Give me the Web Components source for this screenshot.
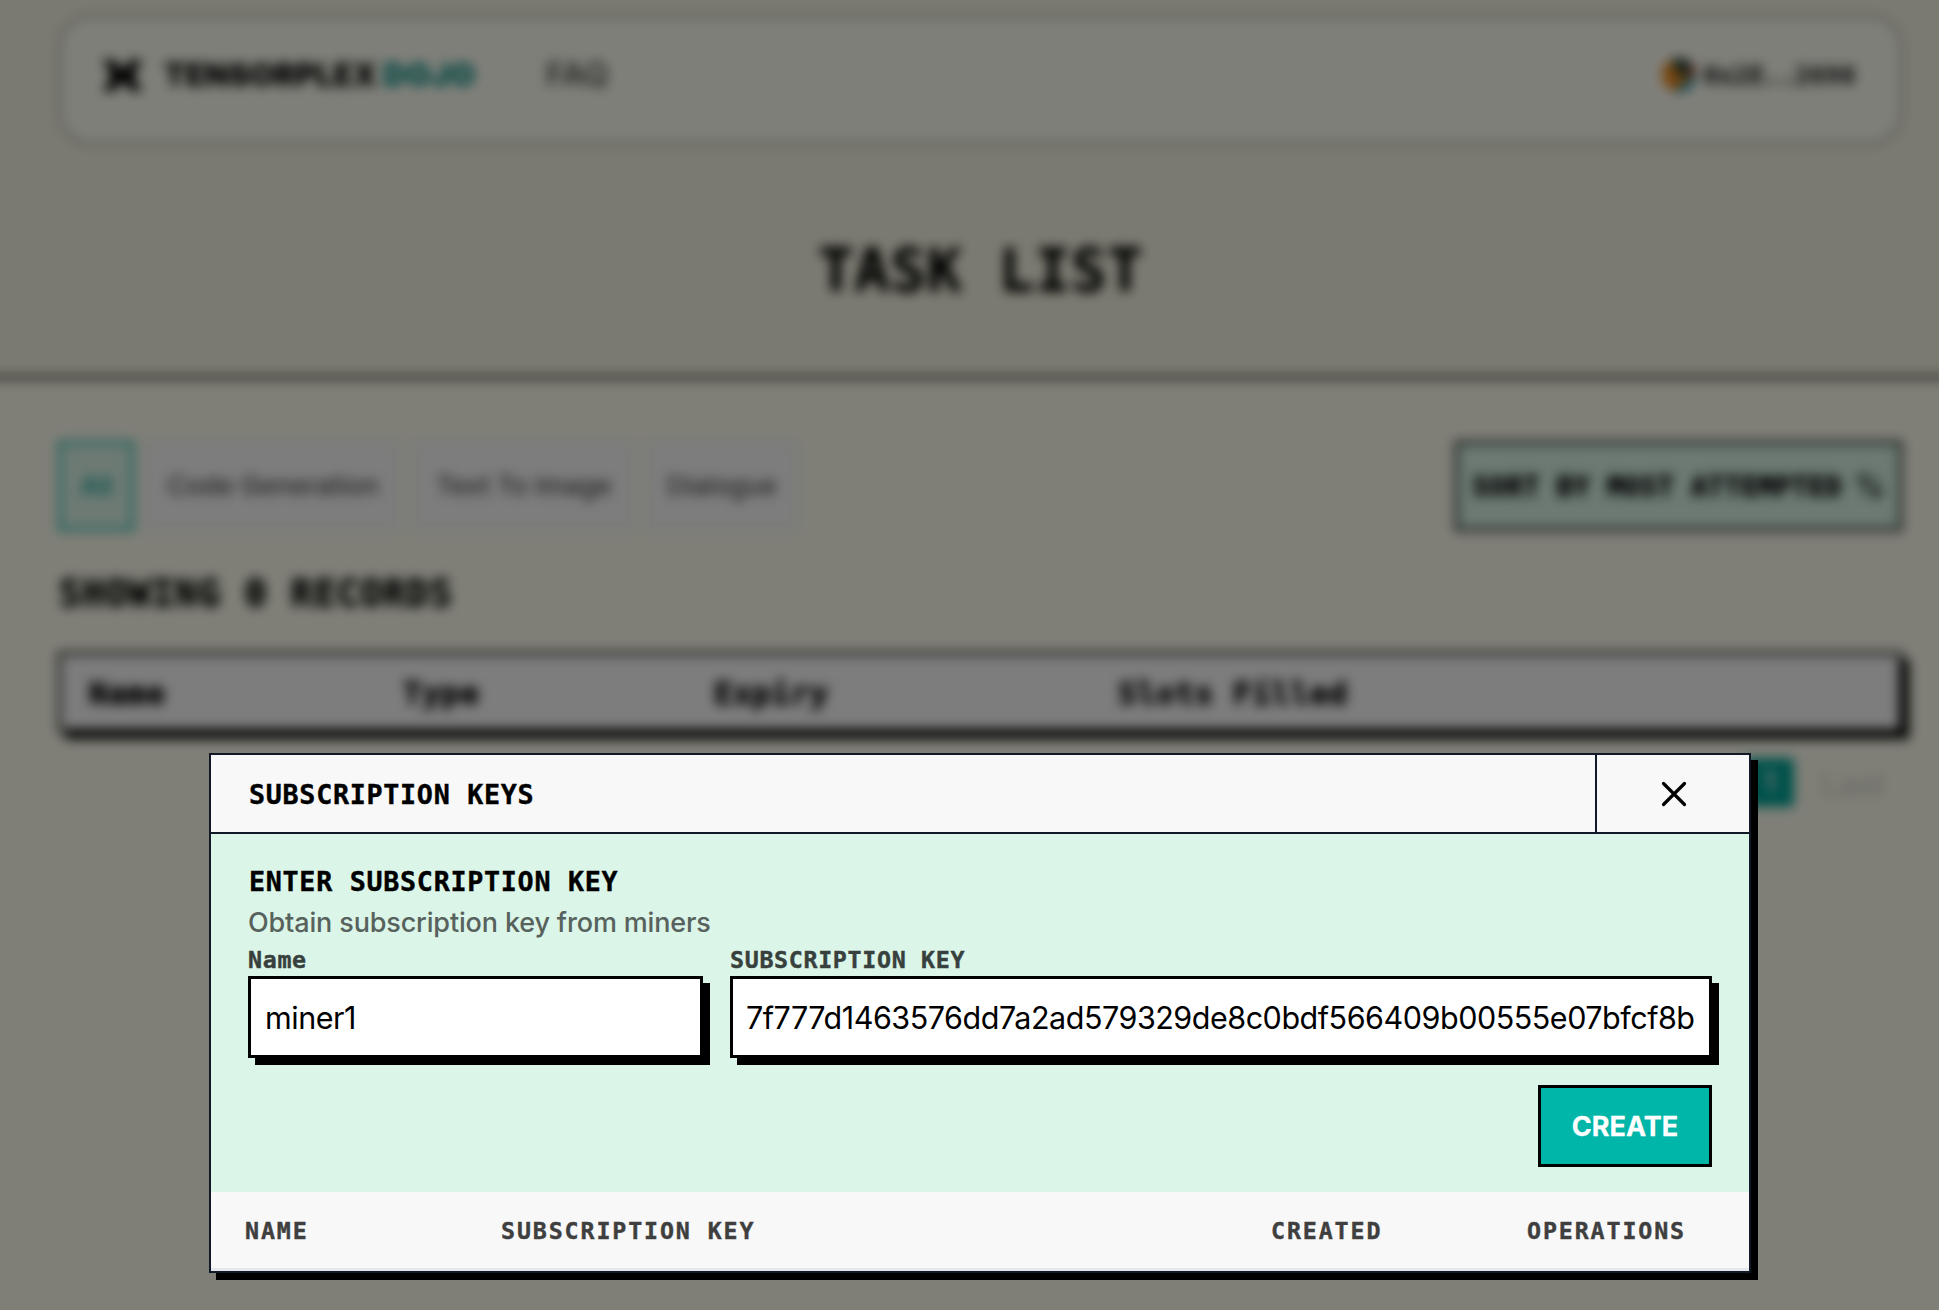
<!DOCTYPE html>
<html lang="en">
<head>
<meta charset="utf-8">
<title>Tensorplex Dojo</title>
<style>
html,body{margin:0;height:100%;overflow:hidden}
body{background:#fffff0;font-family:Inter,"Liberation Sans",sans-serif;color:#000}
</style>
</head>
<body>
<dojo-app></dojo-app>
<script>
const define=(name,html)=>customElements.define(name,class extends HTMLElement{
  constructor(){super();this.attachShadow({mode:'open'}).innerHTML=html;}
});
const MONO='font-family:"DejaVu Sans Mono","Liberation Mono",monospace;font-weight:700;white-space:pre;-webkit-text-stroke:var(--heft,.4px) currentColor;';

define('dojo-nav',`<style>
:host{display:flex;align-items:center;box-sizing:border-box;height:130px;margin:15px 36px 0 58px;padding:0 44px 10px 42px;border:3px solid #b0b0ac;border-radius:32px;background:#fffff4}
svg{display:block}
.logo{margin:0 23px 0 1px}
.brand{display:flex;gap:6px;font-weight:900;font-size:31px;line-height:40px}
.a{letter-spacing:.25px}.b{color:#008a80;letter-spacing:.9px}
.faq{margin-left:70px;font-size:32px;line-height:40px;font-weight:600;color:#4c4c4c}
.acct{margin-left:auto;display:flex;align-items:center;gap:7px;${MONO}font-size:24.5px;letter-spacing:.5px;color:#3c3c3c}
</style>
<svg class="logo" width="37" height="35" viewBox="0 0 40 34"><path d="M0 0h9c7 0 7 11 11 11S24 0 31 0h9v7h-6v20h6v7h-8c-7 0-7-10-12-10S16 34 8 34H0v-7h6V7H0z"/></svg>
<div class="brand"><span class="a">TENSORPLEX</span><span class="b">DOJO</span></div>
<span class="faq">FAQ</span>
<div class="acct"><svg width="34" height="36" viewBox="0 0 36 36"><defs><clipPath id="c"><circle cx="18" cy="18" r="18"/></clipPath></defs><g clip-path="url(#c)"><path fill="#f08a1c" d="M0 0h36v36H0z"/><path fill="#1e4a3a" d="M8-4h28v20L18 20z"/><path fill="#a03838" d="M28 6l10 2v12l-12-4z"/><path fill="#1593b0" d="M38 15v25H6z"/></g></svg><span>0x2E..2698</span></div>`);

define('page-title',`<style>
:host{display:flex;box-sizing:border-box;height:231px;padding:95px 34px 0 57px;justify-content:center;${MONO}font-size:58px;line-height:62px;letter-spacing:1.2px}
</style><slot></slot>`);

define('filter-chip',`<style>
:host{display:flex;align-items:center;justify-content:center;box-sizing:border-box;height:90px;padding:0 0 2px 1px;border:3px solid #f2f2f0;background:#fafafa;color:#4a4a4a;font-size:26.2px;font-weight:500}
:host([active]){border-color:#00b6a8;background:#dbf5e8;color:#009a8e}
</style><slot></slot>`);

define('sort-button',`<style>
:host{display:flex;align-items:center;justify-content:center;gap:14px;box-sizing:border-box;width:447px;height:90px;margin-left:auto;border:3px solid #000;background:#d8f4e6;${MONO}font-size:26.7px;letter-spacing:.72px}
</style><slot></slot><svg width="28" height="26" viewBox="0 0 28 26" fill="none" stroke="#000" stroke-width="3"><path d="M1 8l8-6v20M27 17l-8 7V4"/></svg>`);

define('task-table',`<style>
:host{display:grid;grid-template-columns:314px 311px 404px 1fr;align-items:center;box-sizing:border-box;height:80px;padding:3px 28px 0;border:3px solid #000;box-shadow:7px 7px 0 #000;background:#fafafa;${MONO}font-size:30.5px;letter-spacing:.8px}
</style><span>Name</span><span>Type</span><span>Expiry</span><span>Slots Filled</span>`);

define('page-nav',`<style>
:host{display:flex;justify-content:flex-end;align-items:center;margin-top:26px;gap:23px;padding-right:13px;font-size:28px;line-height:49px}
b{width:49px;text-align:center;background:#00a396;color:#fff;border-radius:4px;font-weight:500}
span{color:#d6d6cb;width:72px;text-align:center;font-size:32px;padding-top:4px;line-height:45px;font-weight:500}
</style><b>1</b><span>Last</span>`);

/* The page bleeds 30px past every window edge so the blur never fades at the border. */
define('task-page',`<style>
:host{display:block;margin:-30px;height:1370px;overflow:hidden;background:#fffff0;filter:blur(6px);--heft:1px}
.top{display:flow-root;background:#f7f5e2;padding:30px 30px 0;border-bottom:3px solid #000}
main{padding:62px 67px 0 88px}
.row{display:flex}
h2{margin:41px 0 36px;padding-left:1px;${MONO}font-size:36.6px;line-height:44px;letter-spacing:1.15px}
</style>
<div class="top"><dojo-nav></dojo-nav><page-title>TASK LIST</page-title></div>
<main><div class="row">
<filter-chip active style="width:76px;margin-right:10px">All</filter-chip>
<filter-chip style="width:257px;margin-right:10px">Code Generation</filter-chip>
<filter-chip style="width:225px;margin-right:9px">Text To Image</filter-chip>
<filter-chip style="width:153px">Dialogue</filter-chip>
<sort-button>SORT BY MOST ATTEMPTED</sort-button></div>
<h2>SHOWING 0 RECORDS</h2>
<task-table></task-table><page-nav></page-nav></main>`);

define('modal-header',`<style>
:host{display:flex;height:77px;border-bottom:2px solid #111827;background:#f8f8f8}
.t{flex:1;display:flex;align-items:center;padding:2px 0 0 38px;${MONO}font-size:26.7px;letter-spacing:.72px}
.x{display:flex;align-items:center;justify-content:center;box-sizing:border-box;width:154px;padding-left:1px;border-left:2px solid #111827}
</style><div class="t"><slot></slot></div><div class="x"><svg width="26" height="26" viewBox="0 0 26 26" fill="none" stroke="#000" stroke-width="3.2" stroke-linecap="round"><path d="M2.500 2.500l21 21M23.500 2.500l-21 21"/></svg></div>`);

define('text-field',`<style>
:host{display:block}
label{display:block;${MONO}font-size:23.3px;line-height:33px;letter-spacing:.67px;color:#37403c}
.box{display:flex;align-items:center;box-sizing:border-box;height:82px;padding:0 13px;border:3px solid #000;background:#fff;box-shadow:7px 7px 0 #000;font-size:30.5px;letter-spacing:-.48px;white-space:nowrap}
</style><label><slot name="label"></slot></label><div class="box"><slot></slot></div>`);

define('key-form',`<style>
:host{display:block;box-sizing:border-box;height:358px;padding:28px 37px 0;background:#dbf5e8}
h3{margin:0;padding-left:1px;${MONO}font-size:26.7px;line-height:40px;letter-spacing:.72px}
p{margin:0;font-size:27px;line-height:41px;font-weight:500;letter-spacing:-.15px;color:#58625d;white-space:nowrap}
.row{display:grid;grid-template-columns:455px 982px;gap:27px}
.name{padding-left:1px}
button{display:block;margin:27px 0 0 auto;box-sizing:border-box;width:174px;height:82px;padding:0;border:3px solid #000;background:#00b6a8;color:#fff;font:700 27px Inter,sans-serif;-webkit-text-stroke:.3px #fff}
</style>
<h3>ENTER SUBSCRIPTION KEY</h3><p>Obtain subscription key from miners</p>
<div class="row"><text-field><span slot="label">Name</span><span class="name">miner1</span></text-field>
<text-field><span slot="label">SUBSCRIPTION KEY</span><span>7f777d1463576dd7a2ad579329de8c0bdf566409b00555e07bfcf8b</span></text-field></div>
<button>CREATE</button>`);

define('key-table',`<style>
:host{display:grid;grid-template-columns:256px 770px 256px 1fr;align-items:center;height:76px;padding-left:34px;border-bottom:3px solid #e5e7eb;background:#f8f8f8;color:#3f3f3f;${MONO}font-size:23.3px;letter-spacing:1.87px}
</style><span>NAME</span><span>SUBSCRIPTION KEY</span><span>CREATED</span><span>OPERATIONS</span>`);

define('key-modal',`<style>
:host{display:block;width:1538px;border:2px solid #111827;box-shadow:7px 7px 0 #000}
</style><modal-header>SUBSCRIPTION KEYS</modal-header><key-form></key-form><key-table></key-table>`);

define('dojo-app',`<style>
:host{display:flow-root}
.overlay{position:fixed;inset:0;display:flex;align-items:flex-start;padding:753px 0 0 209px;background:rgba(0,0,0,.5)}
</style><task-page></task-page><div class="overlay"><key-modal></key-modal></div>`);
</script>
</body>
</html>
